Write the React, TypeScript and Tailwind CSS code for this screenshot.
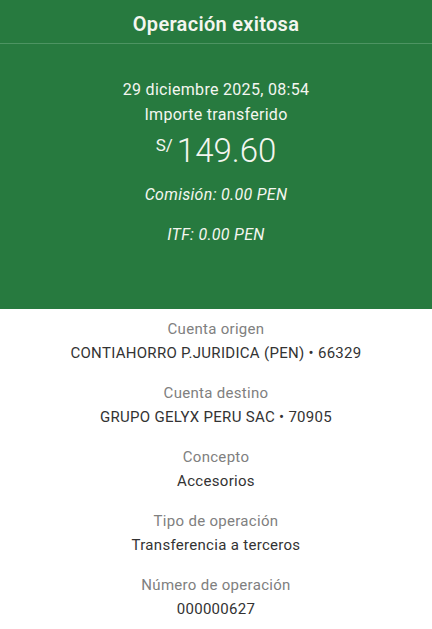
const details = [
  { label: "Cuenta origen", value: "CONTIAHORRO P.JURIDICA (PEN) • 66329" },
  { label: "Cuenta destino", value: "GRUPO GELYX PERU SAC • 70905" },
  { label: "Concepto", value: "Accesorios" },
  { label: "Tipo de operación", value: "Transferencia a terceros" },
  { label: "Número de operación", value: "000000627" },
];

export default function App() {
  return (
    <div className="w-[432px] h-[629px] overflow-hidden bg-white font-['Roboto',sans-serif] flex flex-col">
      <div className="bg-[#277a3f] text-[#f4f6f0]">
        <div className="h-[44px] flex items-center justify-center border-b border-[#4d9462] pt-[4px]">
          <h1 className="text-[20px] font-semibold tracking-[0.3px]">Operación exitosa</h1>
        </div>
        <div className="h-[265px] flex flex-col items-center pt-[35px] tracking-[0.3px]">
          <div className="text-[16px] leading-[22px]">29 diciembre 2025, 08:54</div>
          <div className="text-[16px] leading-[22px] mt-[3px]">Importe transferido</div>
          <div className="flex items-start mt-[5px] tracking-normal">
            <span className="text-[17px] leading-[20px] mt-[4px] mr-[4px]">S/</span>
            <span className="text-[33px] leading-[40px] font-light">149.60</span>
          </div>
          <div className="text-[16px] italic leading-[22px] mt-[13px]">Comisión: 0.00 PEN</div>
          <div className="text-[16px] italic leading-[22px] mt-[18px]">ITF: 0.00 PEN</div>
        </div>
      </div>
      <div className="h-[2px] bg-[#cfe6d3]" />
      <div className="flex-1 flex flex-col items-center pt-[9px] tracking-[0.3px]">
        {details.map((d) => (
          <div key={d.label} className="h-[64px] flex flex-col items-center">
            <div className="text-[15px] leading-[22px] text-[#808080]">{d.label}</div>
            <div className="text-[15px] leading-[22px] text-[#333333] mt-[2px]">{d.value}</div>
          </div>
        ))}
      </div>
      <div className="h-[2px] bg-[#c4c4c4] mb-[1px]" />
    </div>
  );
}
